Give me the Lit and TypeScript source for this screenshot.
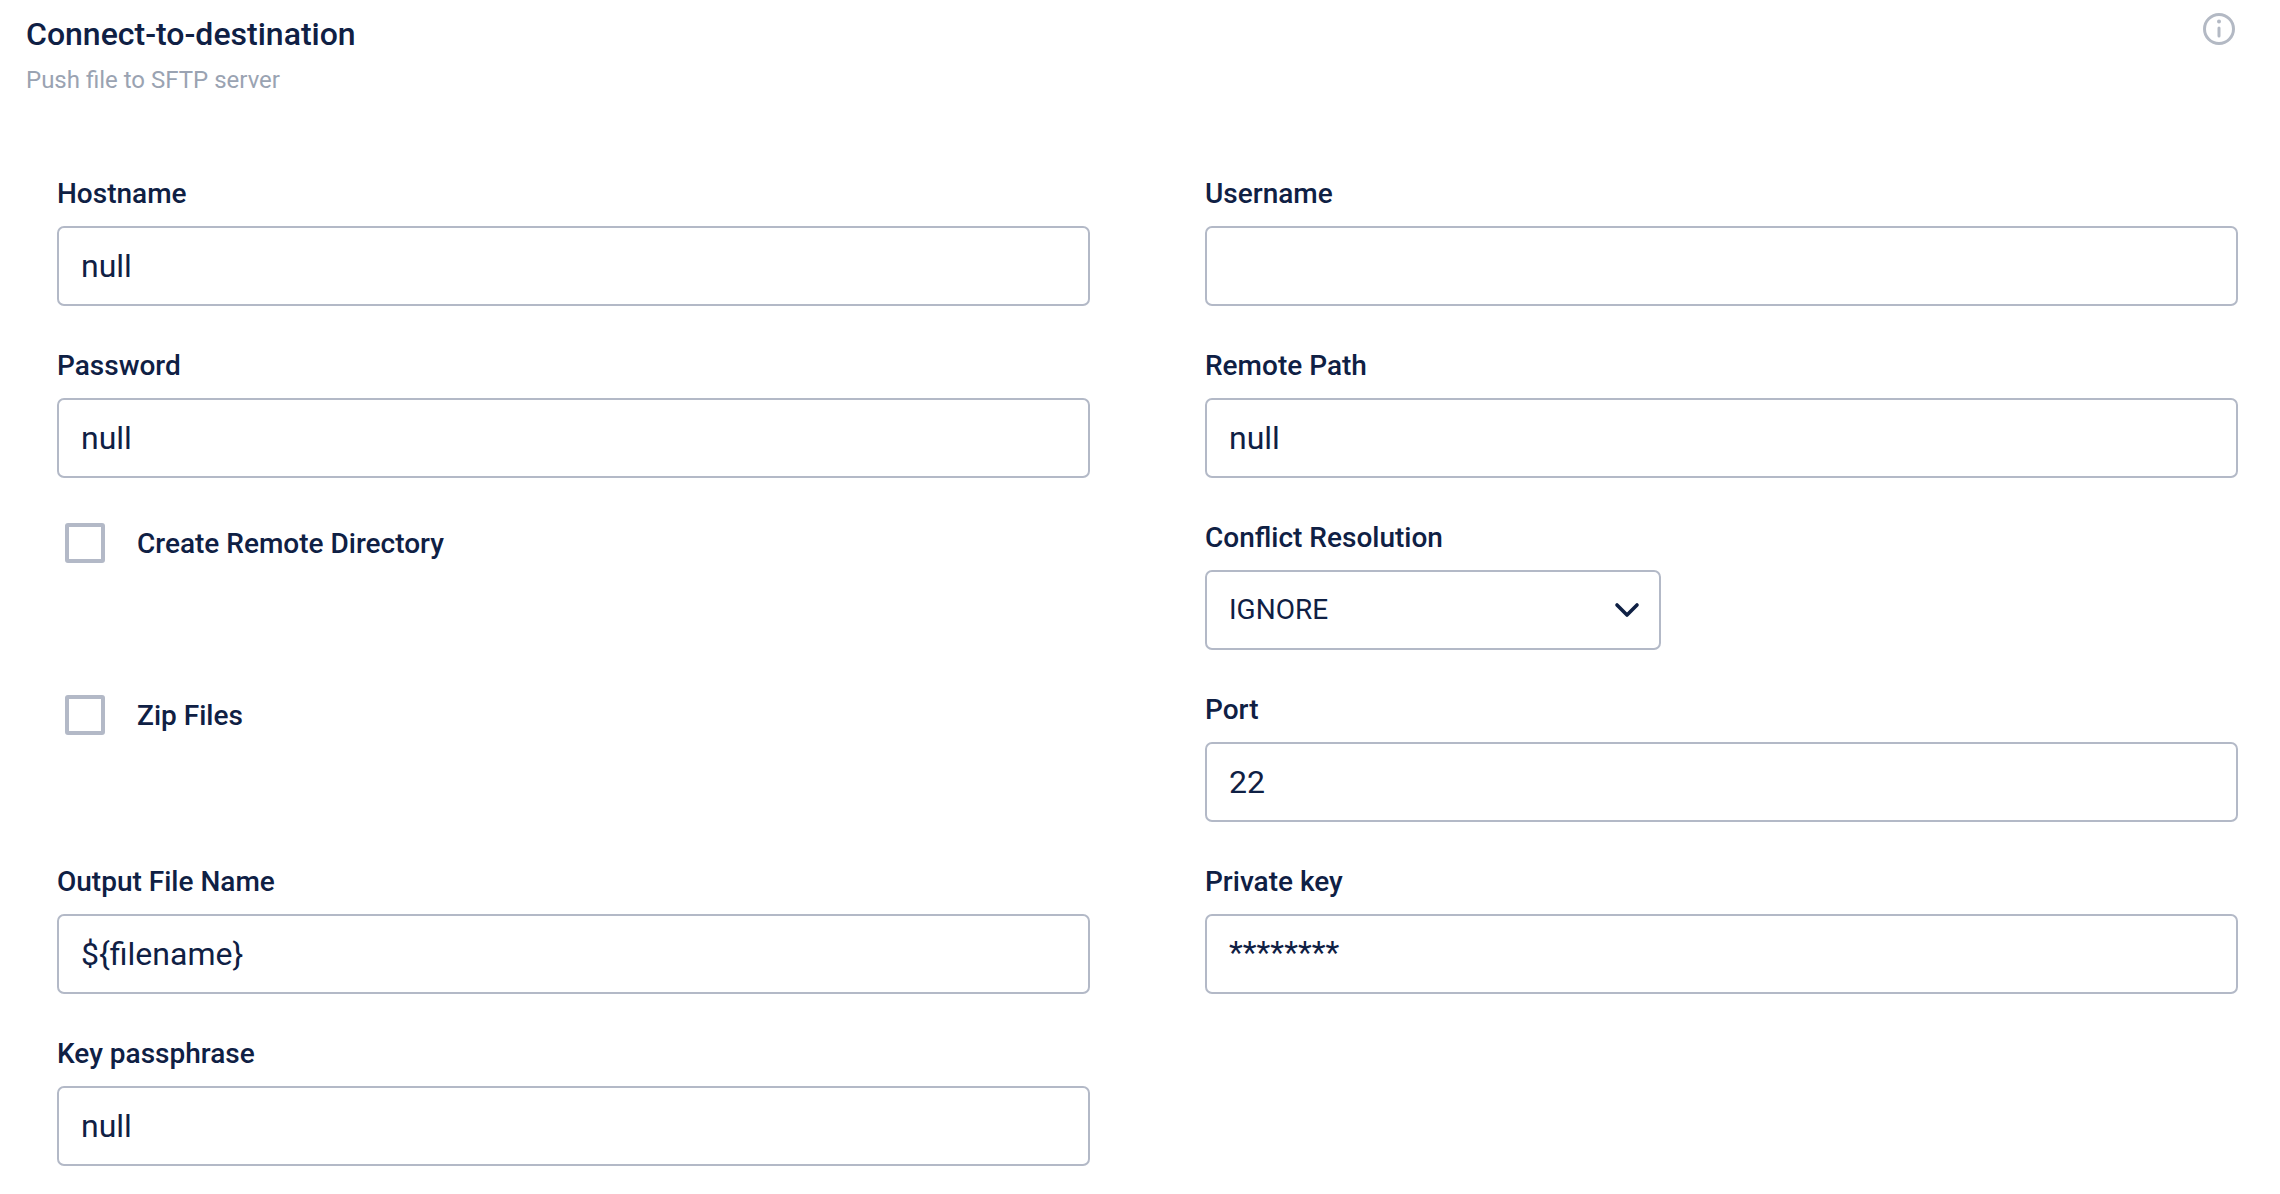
import { LitElement, html, css } from "lit";
import { customElement } from "lit/decorators.js";

@customElement("app-root")
export class AppRoot extends LitElement {
  static styles = css`
    :host { display: block; width: 2280px; height: 1194px; background: #fff; font-family: Roboto, sans-serif; color: #0f2044; overflow: hidden; }
    .head { display: flex; justify-content: space-between; padding: 11px 43px 0 26px; height: 165px; box-sizing: border-box; }
    .title { font-size: 32px; font-weight: 500; line-height: 40px; margin-top: 3px; }
    .sub { font-size: 24px; line-height: 32px; color: #9aa3b2; margin-top: 10px; }
    .info { width: 36px; height: 36px; }
    .grid { display: grid; grid-template-columns: 1033px 1033px; column-gap: 115px; padding-left: 57px; grid-auto-rows: 172px; }
    .label { font-size: 28px; font-weight: 500; line-height: 36px; height: 36px; margin-bottom: 14px; margin-top: 11px; }
    .input { box-sizing: border-box; height: 80px; border: 2px solid #b3b9c7; border-radius: 7px; padding: 0 22px; font-size: 32px; line-height: 76px; }
    .select { width: 456px; display: flex; justify-content: space-between; align-items: center; font-size: 28px; }
    .select svg { width: 30px; height: 30px; margin-right: -5px; }
    .mask { line-height: 72px; }
    .check { display: flex; align-items: center; gap: 32px; padding: 0 0 0 8px; height: 40px; margin-top: 14px; font-size: 28px; font-weight: 500; }
    .box { box-sizing: border-box; width: 40px; height: 40px; border: 4px solid #b3b9c7; border-radius: 3px; }
  `;

  field(label: string, value: string, cls = "") {
    return html`<div><div class="label">${label}</div><div class="input ${cls}">${value}</div></div>`;
  }

  check(label: string) {
    return html`<div class="check"><span class="box"></span><span>${label}</span></div>`;
  }

  render() {
    return html`
      <div class="head">
        <div>
          <div class="title">Connect-to-destination</div>
          <div class="sub">Push file to SFTP server</div>
        </div>
        <svg class="info" viewBox="0 0 36 36" fill="none" stroke="#b3b9c4" stroke-width="3" stroke-linecap="round">
          <circle cx="18" cy="18" r="14.5"></circle>
          <path d="M18 17v8"></path>
          <circle cx="18" cy="10.5" r="2" fill="#b3b9c4" stroke="none"></circle>
        </svg>
      </div>
      <div class="grid">
        ${this.field("Hostname", "null")}
        ${this.field("Username", "")}
        ${this.field("Password", "null")}
        ${this.field("Remote Path", "null")}
        ${this.check("Create Remote Directory")}
        <div>
          <div class="label">Conflict Resolution</div>
          <div class="input select">IGNORE
            <svg viewBox="0 0 30 30" fill="none" stroke="#0f2044" stroke-width="3.6" stroke-linecap="round" stroke-linejoin="round"><path d="M5 10l10 10 10-10"></path></svg>
          </div>
        </div>
        ${this.check("Zip Files")}
        ${this.field("Port", "22")}
        ${this.field("Output File Name", "\${filename}")}
        ${this.field("Private key", "********", "mask")}
        ${this.field("Key passphrase", "null")}
      </div>
    `;
  }
}
